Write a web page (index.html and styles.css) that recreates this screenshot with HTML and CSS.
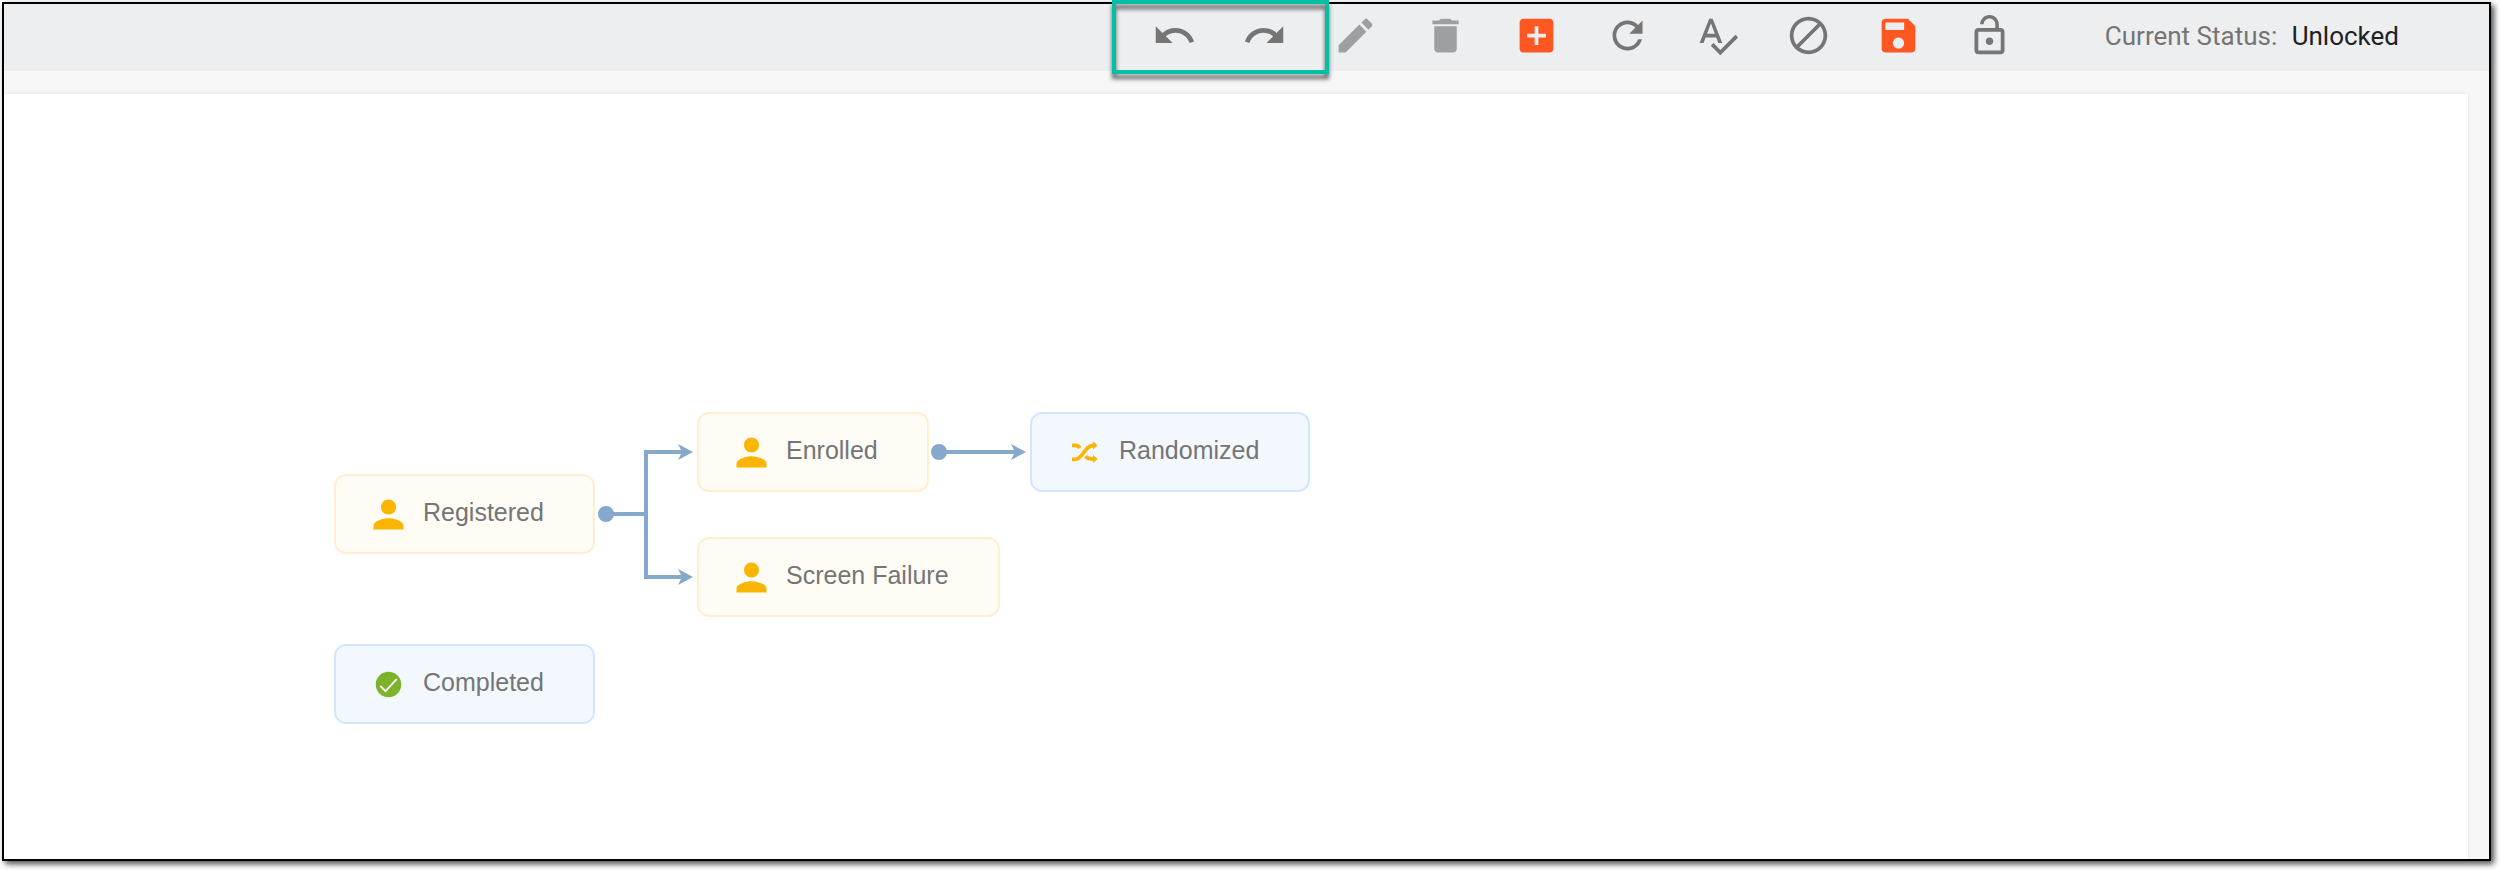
FILE: index.html
```
<!DOCTYPE html>
<html lang="en">
<head>
  <meta charset="UTF-8">
  <meta name="viewport" content="width=device-width, initial-scale=1">
  <title>Subject Status Workflow</title>
  <link rel="stylesheet" href="styles.css">
</head>
<body>
  <main class="frame">
    <header class="toolbar">
      <div class="actions">
        <button type="button" class="action" aria-label="Undo">
          <svg class="icon" viewBox="0 0 24 24"><path d="M12.5 8c-2.65 0-5.05.99-6.9 2.6L2 7v9h9l-3.62-3.62c1.39-1.16 3.16-1.88 5.12-1.88 3.54 0 6.55 2.31 7.6 5.5l2.37-.78C21.08 11.03 17.15 8 12.5 8z"/></svg>
        </button>
        <button type="button" class="action" aria-label="Redo">
          <svg class="icon" viewBox="0 0 24 24"><path d="M18.4 10.6C16.55 8.99 14.15 8 11.5 8c-4.65 0-8.58 3.03-9.96 7.22L3.9 16c1.05-3.19 4.05-5.5 7.6-5.5 1.95 0 3.73.72 5.12 1.88L13 16h9V7l-3.6 3.6z"/></svg>
        </button>
        <button type="button" class="action muted" aria-label="Edit">
          <svg class="icon" viewBox="0 0 24 24"><path d="M3 17.25V21h3.75L17.81 9.94l-3.75-3.75L3 17.25zM20.71 7.04c.39-.39.39-1.02 0-1.41l-2.34-2.34c-.39-.39-1.02-.39-1.41 0l-1.83 1.83 3.75 3.75 1.83-1.83z"/></svg>
        </button>
        <button type="button" class="action muted" aria-label="Delete">
          <svg class="icon" viewBox="0 0 24 24"><path d="M6 19c0 1.1.9 2 2 2h8c1.1 0 2-.9 2-2V7H6v12zM19 4h-3.5l-1-1h-5l-1 1H5v2h14V4z"/></svg>
        </button>
        <button type="button" class="action accent" aria-label="Add">
          <svg class="icon" viewBox="0 0 24 24"><path d="M19 3H5c-1.11 0-2 .9-2 2v14c0 1.1.89 2 2 2h14c1.1 0 2-.9 2-2V5c0-1.1-.9-2-2-2zm-2 10h-4v4h-2v-4H7v-2h4V7h2v4h4v2z"/></svg>
        </button>
        <button type="button" class="action" aria-label="Refresh">
          <svg class="icon" viewBox="0 0 24 24"><path d="M17.65 6.35C16.2 4.9 14.21 4 12 4c-4.42 0-7.99 3.58-7.99 8s3.57 8 7.99 8c3.73 0 6.84-2.55 7.73-6h-2.08c-.82 2.33-3.04 4-5.65 4-3.31 0-6-2.69-6-6s2.69-6 6-6c1.66 0 3.14.69 4.22 1.78L13 11h7V4l-2.35 2.35z"/></svg>
        </button>
        <button type="button" class="action" aria-label="Validate">
          <svg class="icon" viewBox="0 0 24 24"><path d="M12.45 16h2.09L9.43 3H7.57L2.46 16h2.09l1.12-3h5.64l1.14 3zm-6.02-5L8.5 5.48 10.57 11H6.43zm15.16.59l-8.09 8.09L9.83 16l-1.41 1.41 5.09 5.09L23 13l-1.41-1.41z"/></svg>
        </button>
        <button type="button" class="action" aria-label="Disable">
          <svg class="icon" viewBox="0 0 24 24"><path d="M12 2C6.48 2 2 6.48 2 12s4.48 10 10 10 10-4.48 10-10S17.52 2 12 2zM4 12c0-4.42 3.58-8 8-8 1.85 0 3.55.63 4.9 1.69L5.69 16.9C4.63 15.55 4 13.85 4 12zm8 8c-1.85 0-3.55-.63-4.9-1.69L18.31 7.1C19.37 8.45 20 10.15 20 12c0 4.42-3.58 8-8 8z"/></svg>
        </button>
        <button type="button" class="action accent" aria-label="Save">
          <svg class="icon" viewBox="0 0 24 24"><path d="M17 3H5c-1.11 0-2 .9-2 2v14c0 1.1.89 2 2 2h14c1.1 0 2-.9 2-2V7l-4-4zm-5 16c-1.66 0-3-1.34-3-3s1.34-3 3-3 3 1.34 3 3-1.34 3-3 3zm3-10H5V5h10v4z"/></svg>
        </button>
        <button type="button" class="action" aria-label="Lock">
          <svg class="icon" viewBox="0 0 24 24"><path d="M12 17c1.1 0 2-.9 2-2s-.9-2-2-2-2 .9-2 2 .9 2 2 2zm6-9h-1V6c0-2.76-2.24-5-5-5S7 3.24 7 6h1.9c0-1.71 1.39-3.1 3.1-3.1s3.1 1.39 3.1 3.1v2H6c-1.1 0-2 .9-2 2v10c0 1.1.9 2 2 2h12c1.1 0 2-.9 2-2V10c0-1.1-.9-2-2-2zm0 12H6V10h12v10z"/></svg>
        </button>
        <div class="highlight"></div>
      </div>
      <p class="status">Current Status: <strong class="status-value">Unlocked</strong></p>
    </header>

    <section class="workspace">
      <div class="canvas">
        <svg class="edges" aria-hidden="true">
          <defs>
            <marker id="arrow" viewBox="0 0 15 16" markerWidth="15" markerHeight="16" refX="4" refY="8" orient="auto" markerUnits="userSpaceOnUse">
              <path d="M0 0L15 8L0 16L4 8z"/>
            </marker>
          </defs>
          <circle cx="602" cy="420" r="8"/>
          <path class="edge" d="M602 420H642"/>
          <path class="edge" d="M642 420V358H678" marker-end="url(#arrow)"/>
          <path class="edge" d="M642 420V483H678" marker-end="url(#arrow)"/>
          <circle cx="935" cy="358" r="8"/>
          <path class="edge" d="M935 358H1011" marker-end="url(#arrow)"/>
        </svg>

        <div class="node person registered">
          <svg class="icon" viewBox="0 0 24 24"><path d="M12 12c2.21 0 4-1.79 4-4s-1.79-4-4-4-4 1.79-4 4 1.79 4 4 4zm0 2c-2.67 0-8 1.34-8 4v2h16v-2c0-2.66-5.33-4-8-4z"/></svg>
          <span class="label">Registered</span>
        </div>
        <div class="node person enrolled">
          <svg class="icon" viewBox="0 0 24 24"><path d="M12 12c2.21 0 4-1.79 4-4s-1.79-4-4-4-4 1.79-4 4 1.79 4 4 4zm0 2c-2.67 0-8 1.34-8 4v2h16v-2c0-2.66-5.33-4-8-4z"/></svg>
          <span class="label">Enrolled</span>
        </div>
        <div class="node person screen-failure">
          <svg class="icon" viewBox="0 0 24 24"><path d="M12 12c2.21 0 4-1.79 4-4s-1.79-4-4-4-4 1.79-4 4 1.79 4 4 4zm0 2c-2.67 0-8 1.34-8 4v2h16v-2c0-2.66-5.33-4-8-4z"/></svg>
          <span class="label">Screen Failure</span>
        </div>
        <div class="node system randomized">
          <svg class="icon" viewBox="0 0 24 24">
            <path class="shuffle" d="M5.3 8.2H7.2Q8.6 8.2 9.6 9.6M5.3 15.7H7.2C11 15.7 12 8.2 16.8 8.2M12.6 14C13.6 15.3 14.6 15.5 16.8 15.5"/>
            <path d="M16.5 6l2.5 2.2-2.5 2.2zM16.5 13.3l2.5 2.2-2.5 2.2z"/>
          </svg>
          <span class="label">Randomized</span>
        </div>
        <div class="node system completed">
          <svg class="icon" viewBox="0 0 24 24">
            <circle class="check-disc" cx="12" cy="12" r="6.8"/>
            <path class="check-mark" d="M7.6 12.7l2.8 2.8 6-6.4"/>
          </svg>
          <span class="label">Completed</span>
        </div>
      </div>
    </section>
  </main>
</body>
</html>
```
FILE: styles.css
```
* {
  box-sizing: border-box;
}

body {
  margin: 0;
  min-height: 100vh;
  padding: 2px 9px 9px 2px;
  display: flex;
  background: #fff;
  font-family: Roboto, Arial, sans-serif;
  font-size: 26px;
  color: #757575;
}

.frame {
  flex: 1;
  display: flex;
  flex-direction: column;
  border: 2px solid #000;
  background: #f7f7f7;
  box-shadow: 3px 3px 6px rgba(0, 0, 0, 0.7);
}

/* Toolbar */
.toolbar {
  display: flex;
  justify-content: flex-end;
  align-items: center;
  gap: 70px;
  height: 67px;
  padding: 0 90px 4px 0;
  background: #edeef0;
}

.actions {
  position: relative;
  display: grid;
  grid-template-columns: repeat(10, 1fr);
  width: 906px;
}

.action {
  display: flex;
  justify-content: center;
  padding: 0;
  border: 0;
  background: none;
  color: #757575;
  cursor: pointer;
}

.action.muted {
  color: #9e9fa2;
}

.action.accent {
  color: #ff5722;
}

.icon {
  display: block;
  flex: none;
  width: 45px;
  height: 45px;
  fill: currentColor;
}

.highlight {
  position: absolute;
  top: -13px;
  left: -17px;
  width: 217px;
  height: 74px;
  border: 4px solid #00bfa5;
  filter: drop-shadow(0 5px 2px rgba(0, 0, 0, 0.6));
  pointer-events: none;
}

.status {
  margin: 0;
  white-space: nowrap;
}

.status-value {
  margin-left: 8px;
  font-weight: 400;
  color: #212121;
}

/* Diagram */
.workspace {
  flex: 1;
  display: flex;
  padding: 23px 21px 0 0;
}

.canvas {
  position: relative;
  flex: 1;
  background: #fff;
  box-shadow: 0 0 4px rgba(0, 0, 0, 0.1);
}

.edges {
  position: absolute;
  inset: 0;
  width: 100%;
  height: 100%;
  fill: #86a8cd;
}

.edge {
  fill: none;
  stroke: #86a8cd;
  stroke-width: 4;
}

.node {
  position: absolute;
  display: flex;
  align-items: center;
  gap: 12px;
  height: 80px;
  padding: 0 49px 0 30px;
  border: 2px solid;
  border-radius: 12px;
  font-family: "Liberation Sans", Arial, sans-serif;
  font-size: 25px;
  white-space: nowrap;
}

.node.person {
  border-color: #ffefd0;
  background: #fffcf5;
}

.node.system {
  border-color: #d0e7ff;
  background: #f3f8ff;
}

.node .icon {
  color: #f9b500;
}

.label {
  padding-bottom: 4px;
}

.registered {
  left: 330px;
  top: 380px;
}

.enrolled {
  left: 693px;
  top: 318px;
}

.screen-failure {
  left: 693px;
  top: 443px;
}

.randomized {
  left: 1026px;
  top: 318px;
}

.completed {
  left: 330px;
  top: 550px;
}

.node .shuffle {
  fill: none;
  stroke: #f9b500;
  stroke-width: 2;
}

.check-disc {
  fill: #7cb32b;
}

.check-mark {
  fill: none;
  stroke: #fff;
  stroke-width: 1;
}
```
